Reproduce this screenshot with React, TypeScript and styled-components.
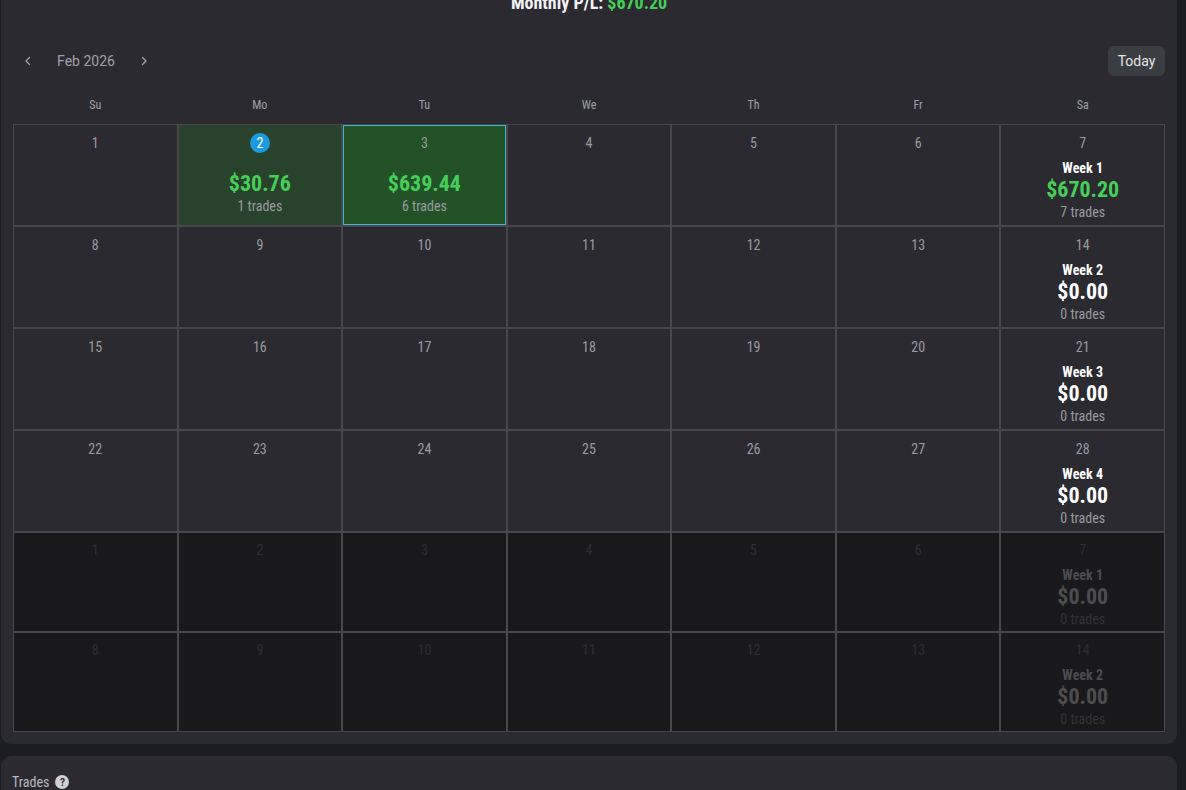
import React from "react";
import styled, { createGlobalStyle } from "styled-components";

const Global = createGlobalStyle`
  html, body { margin: 0; padding: 0; height: 100%; overflow: hidden; background: #1c1d22; }
  body { font-family: "Roboto", "Liberation Sans", sans-serif; }
`;

const cond = `font-family: "Roboto Condensed", "Roboto", "Liberation Sans Narrow", sans-serif; font-stretch: 75%;`;

const Page = styled.div`
  display: flex;
  flex-direction: column;
  gap: 12px;
  padding: 0 9px 0 1px;
  margin-top: -10px;
`;

const Card = styled.section`
  background: #2a2a30;
  border-radius: 10px;
  padding: 0 12px 12px;
`;

const Title = styled.h2`
  ${cond}
  margin: 0;
  height: 26px;
  line-height: 26px;
  text-align: center;
  font-size: 18px;
  font-weight: 700;
  color: #f2f2f7;
`;

const Green = styled.span`
  color: #46cf58;
`;

const Toolbar = styled.div`
  display: flex;
  align-items: center;
  justify-content: space-between;
  height: 30px;
  margin-top: 30px;
`;

const Nav = styled.div`
  display: flex;
  align-items: center;
  color: #a1a1aa;
`;

const NavBtn = styled.span`
  display: flex;
  width: 30px;
  justify-content: center;
`;

const Month = styled.span`
  width: 58px;
  margin: 0 14px;
  text-align: center;
  font-size: 14px;
  white-space: nowrap;
  color: #a1a1aa;
`;

const TodayBtn = styled.button`
  width: 57px;
  height: 30px;
  border: 0;
  border-radius: 6px;
  background: #3a3d42;
  color: #e4e4e7;
  font: 400 14px "Roboto", sans-serif;
`;

const Weekdays = styled.div`
  display: grid;
  grid-template-columns: repeat(7, 1fr);
  height: 48px;
`;

const Weekday = styled.div`
  ${cond}
  text-align: center;
  font-size: 12px;
  line-height: 58px;
  color: #a1a1aa;
`;

const Grid = styled.div`
  display: grid;
  grid-template-columns: repeat(7, 1fr);
  grid-template-rows: repeat(4, 102px) repeat(2, 100px);
`;

const Cell = styled.div<{ $muted?: boolean; $pos?: "light" | "strong"; $selected?: boolean }>`
  ${cond}
  box-sizing: border-box;
  border: 1px solid #47474c;
  display: flex;
  flex-direction: column;
  align-items: center;
  padding-top: ${(p) => (p.$muted ? 7 : 8)}px;
  background: ${(p) => (p.$muted ? "#19191b" : p.$pos === "light" ? "#29422b" : p.$pos === "strong" ? "#245228" : "transparent")};
  box-shadow: ${(p) => (p.$selected ? "inset 0 0 0 1px #3bb6d2" : "none")};
`;

const DayNum = styled.div<{ $muted?: boolean }>`
  height: 20px;
  line-height: 20px;
  font-size: 14px;
  color: ${(p) => (p.$muted ? "#2e2e32" : "#9a9aa0")};
`;

const TodayBadge = styled.span`
  display: block;
  width: 20px;
  height: 20px;
  border-radius: 50%;
  background: #1a9be0;
  color: #fff;
  text-align: center;
`;

const Amount = styled.div<{ $tone: "green" | "white" | "dim"; $gap: number }>`
  margin-top: ${(p) => p.$gap}px;
  height: 26px;
  line-height: 26px;
  font-size: 22px;
  font-weight: 700;
  color: ${(p) => (p.$tone === "green" ? "#46cf58" : p.$tone === "white" ? "#fff" : "#4d4d50")};
`;

const TradeCount = styled.div<{ $muted?: boolean }>`
  height: 18px;
  line-height: 18px;
  font-size: 14px;
  color: ${(p) => (p.$muted ? "#333336" : "#9a9aa0")};
`;

const WeekLabel = styled.div<{ $muted?: boolean }>`
  margin-top: 6px;
  height: 18px;
  line-height: 18px;
  font-size: 14px;
  font-weight: 700;
  color: ${(p) => (p.$muted ? "#4d4d50" : "#fff")};
`;

const TradesHead = styled.div`
  ${cond}
  display: flex;
  align-items: center;
  gap: 6px;
  height: 20px;
  padding: 16px 0 0 -1px;
  margin: 16px 0 0 -1px;
  font-size: 14px;
  color: #b9b9c0;
`;

const Help = styled.span`
  display: flex;
  align-items: center;
  justify-content: center;
  width: 14px;
  height: 14px;
  border-radius: 50%;
  background: #cfcfd4;
  color: #2a2a30;
  font: 700 10px "Roboto", sans-serif;
`;

type C = { day: number; amt?: string; n?: number; pos?: "light" | "strong"; sel?: boolean; today?: boolean };

const Chev = ({ d }: { d: string }) => (
  <svg width="14" height="14" viewBox="0 0 14 14" fill="none" stroke="currentColor" strokeWidth="1.4" strokeLinecap="round" strokeLinejoin="round">
    <path d={d} />
  </svg>
);

function rowCells(start: number, muted: boolean, weekNo: number, first?: boolean, wkAmt = "$0.00", wkN = 0) {
  const out: React.ReactNode[] = [];
  for (let i = 0; i < 6; i++) {
    const day = start + i;
    const data: C = { day };
    if (first && day === 2) Object.assign(data, { amt: "$30.76", n: 1, pos: "light", today: true });
    if (first && day === 3) Object.assign(data, { amt: "$639.44", n: 6, pos: "strong", sel: true });
    out.push(
      <Cell key={`${start}-${i}-${muted}`} $muted={muted} $pos={data.pos} $selected={data.sel}>
        <DayNum $muted={muted}>{data.today ? <TodayBadge>{day}</TodayBadge> : day}</DayNum>
        {data.amt && (
          <>
            <Amount $tone="green" $gap={18}>{data.amt}</Amount>
            <TradeCount>{data.n} trades</TradeCount>
          </>
        )}
      </Cell>
    );
  }
  const tone = muted ? "dim" : wkN > 0 ? "green" : "white";
  out.push(
    <Cell key={`${start}-w-${muted}`} $muted={muted}>
      <DayNum $muted={muted}>{start + 6}</DayNum>
      <WeekLabel $muted={muted}>Week {weekNo}</WeekLabel>
      <Amount $tone={tone} $gap={0}>{wkAmt}</Amount>
      <TradeCount $muted={muted}>{wkN} trades</TradeCount>
    </Cell>
  );
  return out;
}

export default function App() {
  return (
    <Page>
      <Global />
      <Card>
        <Title>
          Monthly P/L: <Green>$670.20</Green>
        </Title>
        <Toolbar>
          <Nav>
            <NavBtn><Chev d="M8.5 3.5 5 7l3.5 3.5" /></NavBtn>
            <Month>Feb 2026</Month>
            <NavBtn><Chev d="M5.5 3.5 9 7l-3.5 3.5" /></NavBtn>
          </Nav>
          <TodayBtn>Today</TodayBtn>
        </Toolbar>
        <Weekdays>
          {["Su", "Mo", "Tu", "We", "Th", "Fr", "Sa"].map((d) => (
            <Weekday key={d}>{d}</Weekday>
          ))}
        </Weekdays>
        <Grid>
          {rowCells(1, false, 1, true, "$670.20", 7)}
          {rowCells(8, false, 2)}
          {rowCells(15, false, 3)}
          {rowCells(22, false, 4)}
          {rowCells(1, true, 1)}
          {rowCells(8, true, 2)}
        </Grid>
      </Card>
      <Card>
        <TradesHead>
          Trades <Help>?</Help>
        </TradesHead>
      </Card>
    </Page>
  );
}
